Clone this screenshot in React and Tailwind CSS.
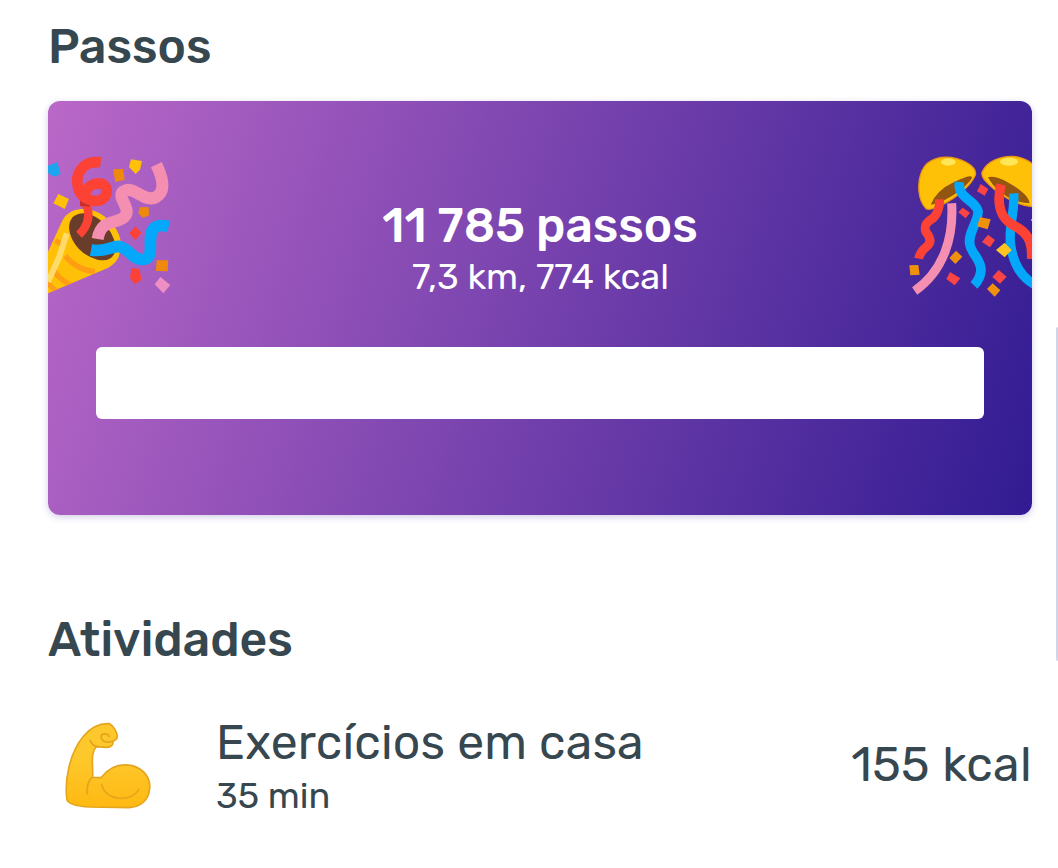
import React from 'react';

const activities = [
  { name: 'Exercícios em casa', duration: '35 min', energy: '155 kcal' },
];

function PartyPopper() {
  return (
    <svg viewBox="54 30 390 450" className="h-[150px] w-[130px] shrink-0" fill="none">
      <defs>
        <clipPath id="cone">
          <path d="M-30 520 L54 335 L98 240 Q115 210 152 207 Q210 205 250 255 Q285 300 266 350 Q262 365 235 383 L54 460 Z" />
        </clipPath>
      </defs>
      <path d="M-30 520 L54 335 L98 240 Q115 210 152 207 Q210 205 250 255 Q285 300 266 350 Q262 365 235 383 L54 460 Z" fill="#ffc107" />
      <g clipPath="url(#cone)">
        <path d="M76 302 L104 318 M106 348 Q140 390 195 395 M66 385 Q88 420 125 436 M48 425 L80 455" stroke="#ff9e12" strokeWidth="16" />
        <path d="M110 280 L88 350 L54 425" stroke="#ffe07a" strokeWidth="18" strokeOpacity="0.85" />
      </g>
      <path d="M129 230 Q165 205 211 240 Q268 292 252 343 Q239 367 202 359 Q150 344 128 301 Q106 256 129 230 Z" fill="#6a3d2a" />
      {/* streamers */}
      <path d="M147 284 Q183 250 173 205 L164 188" stroke="#fb4234" strokeWidth="25" />
      <path d="M150 178 L176 183 L180 200 L150 198 Z" fill="#c92e2e" />
      <path d="M212 67 C158 60 132 103 145 146 C158 188 222 197 230 158 C236 119 170 120 164 169" stroke="#fb4234" strokeWidth="32" />
      <path d="M203 297 C213 232 266 255 286 227 C304 204 258 171 280 154 C310 133 344 191 379 171 C408 153 398 113 379 74" stroke="#f48fb1" strokeWidth="36" />
      <path d="M183 330 C222 337 235 322 265 319 C300 324 306 363 342 358 C381 351 342 280 378 260 Q393 253 416 260" stroke="#04a8fa" strokeWidth="35" />
      {/* confetti */}
      <path d="M54 77 L82 67 L92 103 L70 110 L54 98 Z" fill="#1ca5ee" />
      <path d="M85 162 L117 177 L104 207 L70 190 Z M303 58 L336 63 L330 89 L317 102 L297 81 Z" fill="#ffc107" />
      <path d="M249 88 L279 87 L284 119 L256 126 Z M329 202 L355 201 L358 226 L338 233 L325 219 Z M380 361 L415 361 L413 394 L378 393 Z" fill="#ef890c" />
      <path d="M316 259 L334 278 L316 301 L298 280 Z M305 384 L329 388 L334 420 L315 433 L300 413 Z" fill="#fb4234" />
      <path d="M391 411 L421 435 L400 460 L374 433 Z" fill="#ee8fc3" />
    </svg>
  );
}

function ConfettiBalls() {
  return (
    <svg viewBox="36 30 390 450" className="h-[150px] w-[130px] shrink-0" fill="none">
      <g fill="#ffc107" stroke="#ed970f" strokeWidth="4">
        <path d="M108 206 C82 178 81 127 96 92 C113 55 158 45 201 56 C238 67 260 86 256 105 C239 145 183 185 133 204 Q118 211 108 206 Z" />
        <path d="M277 95 C291 65 329 48 369 49 Q414 54 442 85 V200 C380 202 318 158 284 120 Q272 105 277 95 Z" />
      </g>
      <path d="M122 194 Q139 151 192 126 Q247 100 246 113 C231 143 160 190 122 194 Z" fill="#925610" />
      <path d="M294 112 C316 103 362 129 390 151 Q417 172 419 190 C363 189 312 148 294 112 Z" fill="#925610" />
      <ellipse cx="175" cy="66" rx="22" ry="11" fill="#ffe657" />
      <ellipse cx="357" cy="65" rx="27" ry="12" fill="#ffe657" />
      {/* streamers */}
      <path d="M149 178 Q149 216 130 234 C106 248 101 259 108 276 Q129 302 112 318 Q90 335 86 356" stroke="#fb4234" strokeWidth="27" />
      <path d="M185 190 C191 289 163 391 74 453" stroke="#f48fb1" strokeWidth="27" />
      <path d="M208 126 C202 176 255 179 264 213 C267 243 231 281 240 315 C245 343 273 357 273 391 Q271 416 252 436" stroke="#04a8fa" strokeWidth="29" />
      <path d="M371 160 C375 220 354 265 362 315 C370 373 395 415 440 437" stroke="#04a8fa" strokeWidth="28" />
      <path d="M333 133 C316 205 337 240 377 260 C421 282 427 318 425 357" stroke="#fb4234" strokeWidth="29" />
      {/* confetti */}
      <path d="M272 132 L295 147 L284 167 L261 154 Z M218 203 L240 218 L227 235 L205 217 Z M294 284 L315 300 L300 322 L276 306 Z M180 396 L211 415 L194 436 L169 417 Z M326 390 L350 410 L330 431 L307 411 Z" fill="#fb4444" />
      <path d="M270 232 L302 238 L293 268 L261 259 Z M198 332 L217 350 L196 372 L178 354 Z M58 376 L85 375 L89 404 L61 406 Z M308 430 L331 451 L314 470 L291 447 Z" fill="#ef910c" />
      <path d="M344 308 L365 330 L344 352 L318 330 Z M422 239 L430 235 V250 Z" fill="#ffc421" />
    </svg>
  );
}

function FlexedArm() {
  return (
    <svg viewBox="30 18 288 288" className="size-24 shrink-0" fill="none" strokeLinecap="round" strokeLinejoin="round">
      <defs>
        <linearGradient id="skin" x1="0" y1="0" x2="0" y2="1">
          <stop offset="0.4" stopColor="#fdc82c" />
          <stop offset="1" stopColor="#ffb912" />
        </linearGradient>
      </defs>
      <path
        d="M51 270 C43 215 57 130 101 78 C123 52 150 39 179 41 C190 47 201 66 202 79 C202 89 195 92 188 94 C191 105 184 112 169 112 L138 110 C120 132 130 169 128 202 L153 203 C176 173 209 159 247 167 C280 177 302 202 299 235 C296 271 272 291 237 293 L119 291 C84 289 57 285 51 270 Z"
        fill="url(#skin)"
        stroke="#e5a51c"
        strokeWidth="5"
      />
      <path
        d="M188 94 Q157 102 153 81 C154 67 175 70 177 80 M120 91 Q127 108 144 110 M128 202 Q113 211 111 241 Q109 246 113 252 M155 224 C169 277 246 275 266 239"
        stroke="#e5a51c"
        strokeWidth="5"
      />
    </svg>
  );
}

function StepsCard() {
  return (
    <div className="mt-[26px] h-[414px] overflow-hidden rounded-xl bg-linear-[108deg,#ba68c8,#311b92] pt-[49px] text-white shadow-[0_2px_7px_rgba(49,27,146,0.22)]">
      <div className="flex items-start justify-between">
        <PartyPopper />
        <div className="flex flex-col items-center pt-12 whitespace-nowrap">
          <div className="text-5xl/[56px] font-medium">11 785 passos</div>
          <div className="mt-[3px] pl-px text-4xl/[40px]">7,3 km, 774 kcal</div>
        </div>
        <ConfettiBalls />
      </div>
      <div className="mx-12 mt-[47px] h-[72px] rounded-md bg-white" />
    </div>
  );
}

export default function App() {
  return (
    <main className="relative h-[868px] overflow-hidden bg-white pt-[19px] pr-[26px] pl-12 font-['Rubik','Roboto',sans-serif] text-[#37474f]">
      <section>
        <h2 className="text-5xl/[56px] font-medium">Passos</h2>
        <StepsCard />
      </section>

      <section className="mt-[97px]">
        <h2 className="text-5xl/[56px] font-medium">Atividades</h2>
        <div className="mt-[47px]">
          {activities.map((activity) => (
            <div key={activity.name} className="flex items-center">
              <div className="pb-[3px] pl-3">
                <FlexedArm />
              </div>
              <div className="ml-[60px] flex-1">
                <div className="text-5xl/[56px] tracking-[0.2px]">{activity.name}</div>
                <div className="mt-[5px] text-4xl/[40px]">{activity.duration}</div>
              </div>
              <div className="pb-0.5 text-5xl/[56px] tracking-[0.4px]">{activity.energy}</div>
            </div>
          ))}
        </div>
      </section>

      {/* scroll indicator */}
      <div className="absolute top-[327px] right-0 h-[334px] w-0.5 rounded-l-sm bg-[#d0d5ea]" />
    </main>
  );
}
